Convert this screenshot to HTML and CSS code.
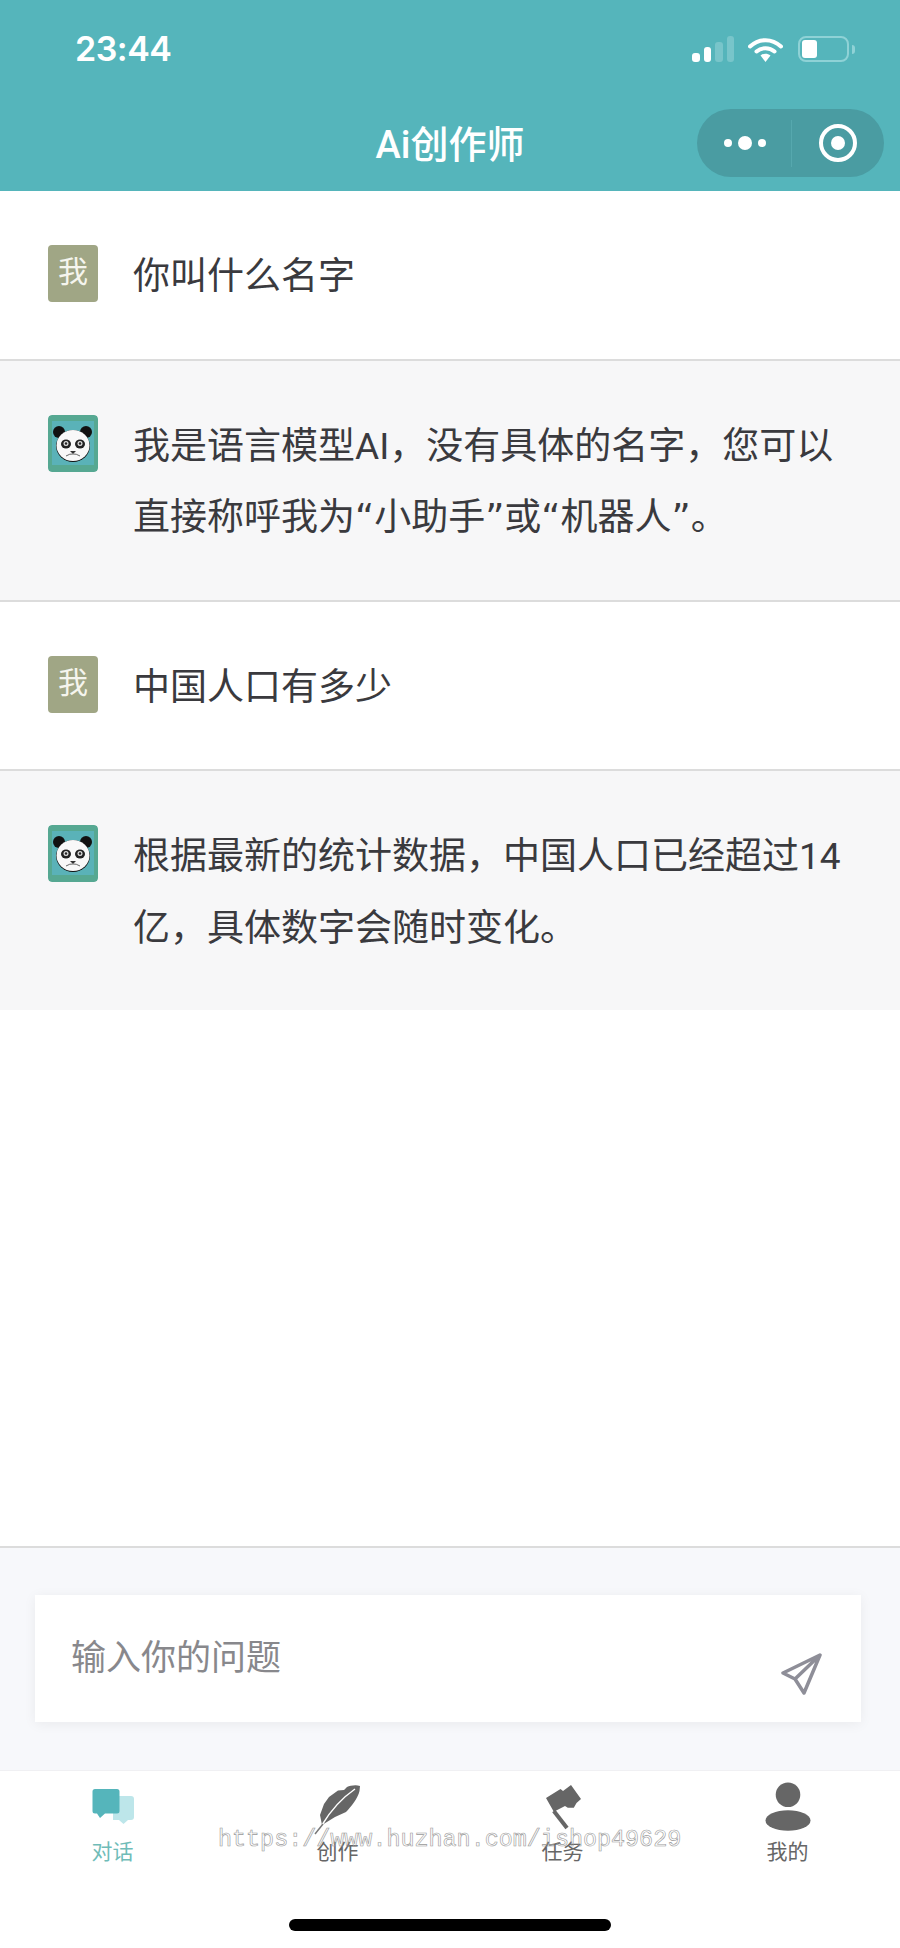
FILE: index.html
```html
<!DOCTYPE html>
<html lang="zh-CN">
<head>
  <meta charset="UTF-8">
  <meta name="viewport" content="width=device-width, initial-scale=1.0">
  <title>Ai创作师</title>
  <link rel="stylesheet" href="styles.css">
</head>
<body>
<div class="page">
  <header class="header">
    <div class="status-bar">
      <span class="time">23:44</span>
      <div class="status-icons">
        <div class="signal">
          <i class="bar bar1"></i>
          <i class="bar bar2"></i>
          <i class="bar bar3"></i>
          <i class="bar bar4"></i>
        </div>
        <svg class="wifi" width="35" height="25" viewBox="0 0 35 25">
          <path d="M2 9.5C11 1 24 1 33 9.5" fill="none" stroke="#fff" stroke-width="4" stroke-linecap="round"/>
          <path d="M8.5 14.5C13.5 10 21.5 10 26.5 14.5" fill="none" stroke="#fff" stroke-width="4" stroke-linecap="round"/>
          <path d="M12.5 18.5C15.5 16 19.5 16 22.5 18.5L17.5 25Z" fill="#fff"/>
        </svg>
        <div class="battery"><i class="battery-fill"></i></div>
        <i class="battery-nub"></i>
      </div>
    </div>
    <div class="nav-bar">
      <h1 class="nav-title">Ai创作师</h1>
      <div class="capsule">
        <div class="capsule-dots"><i class="dot"></i><i class="dot big"></i><i class="dot"></i></div>
        <i class="capsule-line"></i>
        <div class="capsule-close"><i></i></div>
      </div>
    </div>
  </header>

  <main class="chat">
    <div class="msg">
      <div class="avatar avatar-me">我</div>
      <div class="msg-text">你叫什么名字</div>
    </div>
    <div class="msg msg-ai">
      <svg class="avatar" viewBox="0 0 50 57">
        <rect width="50" height="57" rx="4" fill="#56a892"/>
        <rect x="4" y="6" width="42" height="44" fill="#5ab2b8"/>
        <circle cx="11" cy="17" r="6" fill="#111"/>
        <circle cx="38" cy="17" r="6" fill="#111"/>
        <ellipse cx="25" cy="31" rx="17" ry="16" fill="#111"/>
        <ellipse cx="25" cy="30.5" rx="16.5" ry="15.5" fill="#f8f8f8"/>
        <ellipse cx="18" cy="29" rx="5" ry="4.5" fill="#222"/>
        <ellipse cx="32" cy="29" rx="5" ry="4.5" fill="#222"/>
        <circle cx="18" cy="28.5" r="2.5" fill="#ddd"/>
        <circle cx="32" cy="28.5" r="2.5" fill="#ddd"/>
        <circle cx="18" cy="28.5" r="1.2" fill="#222"/>
        <circle cx="32" cy="28.5" r="1.2" fill="#222"/>
        <path d="M22 36H28L25 39Z" fill="#333"/>
        <path d="M18 41Q22 38.5 25 39Q28 38.5 32 41" fill="none" stroke="#666" stroke-width="1"/>
      </svg>
      <div class="msg-text">我是语言模型AI，没有具体的名字，您可以直接称呼我为<span class="quote">“</span>小助手<span class="quote">”</span>或<span class="quote">“</span>机器人<span class="quote">”</span>。</div>
    </div>
    <div class="msg">
      <div class="avatar avatar-me">我</div>
      <div class="msg-text">中国人口有多少</div>
    </div>
    <div class="msg msg-ai msg-last">
      <svg class="avatar" viewBox="0 0 50 57">
        <rect width="50" height="57" rx="4" fill="#56a892"/>
        <rect x="4" y="6" width="42" height="44" fill="#5ab2b8"/>
        <circle cx="11" cy="17" r="6" fill="#111"/>
        <circle cx="38" cy="17" r="6" fill="#111"/>
        <ellipse cx="25" cy="31" rx="17" ry="16" fill="#111"/>
        <ellipse cx="25" cy="30.5" rx="16.5" ry="15.5" fill="#f8f8f8"/>
        <ellipse cx="18" cy="29" rx="5" ry="4.5" fill="#222"/>
        <ellipse cx="32" cy="29" rx="5" ry="4.5" fill="#222"/>
        <circle cx="18" cy="28.5" r="2.5" fill="#ddd"/>
        <circle cx="32" cy="28.5" r="2.5" fill="#ddd"/>
        <circle cx="18" cy="28.5" r="1.2" fill="#222"/>
        <circle cx="32" cy="28.5" r="1.2" fill="#222"/>
        <path d="M22 36H28L25 39Z" fill="#333"/>
        <path d="M18 41Q22 38.5 25 39Q28 38.5 32 41" fill="none" stroke="#666" stroke-width="1"/>
      </svg>
      <div class="msg-text">根据最新的统计数据，中国人口已经超过14亿，具体数字会随时变化。</div>
    </div>
  </main>

  <section class="composer">
    <div class="input-box">
      <input class="question" placeholder="输入你的问题">
      <svg class="send" width="42" height="42" viewBox="0 0 42 42">
        <path d="M40 2L3 20L15 26L24 40Z M40 2L15 26" fill="none" stroke="#8e8e98" stroke-width="3.5" stroke-linejoin="round"/>
      </svg>
    </div>
  </section>

  <nav class="tabbar">
    <div class="tab tab-active">
      <svg class="tab-icon" viewBox="0 0 80 66">
        <path d="M40 24H58Q61 24 61 27V45Q61 48 58 48H55L50.5 52L46 48H40Z" fill="#bde6ea"/>
        <path d="M22 17H44Q46.5 17 46.5 19.5V39Q46.5 41.5 44 41.5H32L27 46L24 41.5H22Q19.5 41.5 19.5 39V19.5Q19.5 17 22 17Z" fill="#55b5bb"/>
      </svg>
      <span>对话</span>
    </div>
    <div class="tab">
      <svg class="tab-icon" viewBox="0 0 80 66">
        <path d="M62 14C57 12.5 52 14 49 15L46 18L40 18.5L31 25L26 32L22 43L24 53L37 45L48 40C53 35 60 26 61.5 19Z" fill="#666"/>
        <path d="M57 17C44 26 33 38 24 53" fill="none" stroke="#fff" stroke-width="1.5"/>
        <path d="M25 52L17 62" fill="none" stroke="#777" stroke-width="1.5"/>
      </svg>
      <span>创作</span>
    </div>
    <div class="tab">
      <svg class="tab-icon" viewBox="0 0 80 66">
        <path d="M23 26L37.5 17L40 19L48 13L58 27L53.5 31L50.8 35.7H44.8L42 34L30.8 39.7Z" fill="#666"/>
        <path d="M30.8 39L44 56" fill="none" stroke="#666" stroke-width="4"/>
      </svg>
      <span>任务</span>
    </div>
    <div class="tab">
      <svg class="tab-icon" viewBox="0 0 80 66">
        <circle cx="40" cy="22.7" r="12.3" fill="#666"/>
        <ellipse cx="40" cy="48.5" rx="22.5" ry="10.3" fill="#666"/>
      </svg>
      <span>我的</span>
    </div>
  </nav>

  <div class="home-bar"></div>
  <div class="watermark">https://www.huzhan.com/ishop49629</div>
</div>
</body>
</html>
```

FILE: styles.css
```css
* {
  box-sizing: border-box;
}
body {
  margin: 0;
  font-family: Roboto, "Noto Sans CJK SC", sans-serif;
  background: white;
}
.page {
  position: relative;
  display: flex;
  flex-direction: column;
  width: 900px;
  height: 1948px;
  overflow: hidden;
}

/* header */
.header {
  height: 191px;
  background: #55b5bb;
  color: white;
}
.status-bar {
  display: flex;
  justify-content: space-between;
  align-items: flex-start;
  height: 109px;
  padding: 28px 45px 0 75px;
}
.time {
  font-family: Inter, sans-serif;
  font-size: 34px;
  font-weight: 600;
  letter-spacing: -0.5px;
  line-height: 42px;
}
.status-icons {
  display: flex;
  align-items: center;
  margin-top: 8px;
}
.signal {
  display: flex;
  align-items: flex-end;
  gap: 4px;
  height: 26px;
  margin-right: 14px;
}
.bar {
  width: 7.5px;
  border-radius: 3px;
  background: white;
}
.bar1 { height: 9px; }
.bar2 { height: 15px; }
.bar3 { height: 20px; background: #78c5ca; }
.bar4 { height: 26px; background: #78c5ca; }
.wifi {
  margin-right: 15px;
}
.battery {
  width: 51px;
  height: 26px;
  padding: 2px;
  border: 2px solid #8fd2d6;
  border-radius: 8px;
}
.battery-fill {
  display: block;
  width: 15px;
  height: 18px;
  border-radius: 3px;
  background: white;
}
.battery-nub {
  width: 3px;
  height: 9px;
  margin-left: 3px;
  border-radius: 0 3px 3px 0;
  background: #8fd2d6;
}
.nav-bar {
  position: relative;
  height: 82px;
}
.nav-title {
  margin: 0;
  padding-top: 11px;
  font-size: 38px;
  font-weight: 500;
  line-height: 50px;
  text-align: center;
}
.capsule {
  position: absolute;
  top: 0;
  left: 697px;
  display: flex;
  align-items: center;
  width: 187px;
  height: 68px;
  border-radius: 34px;
  background: #4a9ca2;
}
.capsule-dots {
  display: flex;
  align-items: center;
  justify-content: center;
  gap: 6px;
  width: 94px;
  padding-left: 2px;
}
.dot {
  width: 8px;
  height: 8px;
  border-radius: 50%;
  background: white;
}
.dot.big {
  width: 14px;
  height: 14px;
}
.capsule-line {
  width: 1px;
  height: 47px;
  background: #56a8ae;
}
.capsule-close {
  display: flex;
  align-items: center;
  justify-content: center;
  width: 38px;
  height: 38px;
  margin-left: 27px;
  border: 4px solid white;
  border-radius: 50%;
}
.capsule-close i {
  width: 14px;
  height: 14px;
  border-radius: 50%;
  background: white;
}

/* messages */
.chat {
  flex: 1;
}
.msg {
  display: flex;
  padding: 48px;
  border-bottom: 2px solid #dcdcdc;
}
.msg-ai {
  background: #f7f7f8;
}
.msg-last {
  border-bottom: none;
}
.avatar {
  flex: none;
  display: block;
  width: 50px;
  height: 57px;
  margin-top: 6px;
  border-radius: 4px;
}
.avatar-me {
  background: #a0a685;
  color: #f5f5ee;
  font-size: 30px;
  line-height: 54px;
  text-align: center;
}
.msg-text {
  margin: 2px 0 -2px 35px;
  color: #3a3a3e;
  font-size: 37px;
  line-height: 71.5px;
}
.quote {
  font-family: "DejaVu Sans", sans-serif;
}

/* input */
.composer {
  height: 224px;
  padding: 47px 39px 48px 35px;
  border-top: 2px solid #dcdcdc;
  background: #f7f8fb;
}
.input-box {
  display: flex;
  align-items: center;
  height: 127px;
  padding: 0 37px 0 36px;
  background: white;
  box-shadow: 0 2px 12px rgba(0,0,0,0.06);
}
.question {
  flex: 1;
  min-width: 0;
  height: 60px;
  padding: 0;
  border: none;
  outline: none;
  background: none;
  font-family: inherit;
  font-size: 35px;
}
.question::placeholder {
  color: #88888c;
  opacity: 1;
}
.send {
  align-self: flex-end;
  margin: 0 2px 27px 0;
}

/* tabs */
.tabbar {
  display: grid;
  grid-template-columns: repeat(4, 225px);
  height: 178px;
  border-top: 1px solid #f0f0f3;
}
.tab {
  padding-top: 1px;
  color: #666;
  font-size: 21px;
  line-height: 28px;
  text-align: center;
}
.tab-active {
  color: #6fbcb8;
}
.tab-icon {
  display: block;
  width: 80px;
  height: 66px;
  margin: 0 auto;
  overflow: visible;
}
.home-bar {
  position: absolute;
  left: 289px;
  top: 1919px;
  width: 322px;
  height: 12px;
  border-radius: 6px;
  background: black;
}
.watermark {
  position: absolute;
  left: 218px;
  top: 1825px;
  width: 470px;
  color: transparent;
  font-family: "Liberation Mono", monospace;
  font-size: 23.4px;
  line-height: 30px;
  -webkit-text-stroke: 0.6px #999;
}
```
